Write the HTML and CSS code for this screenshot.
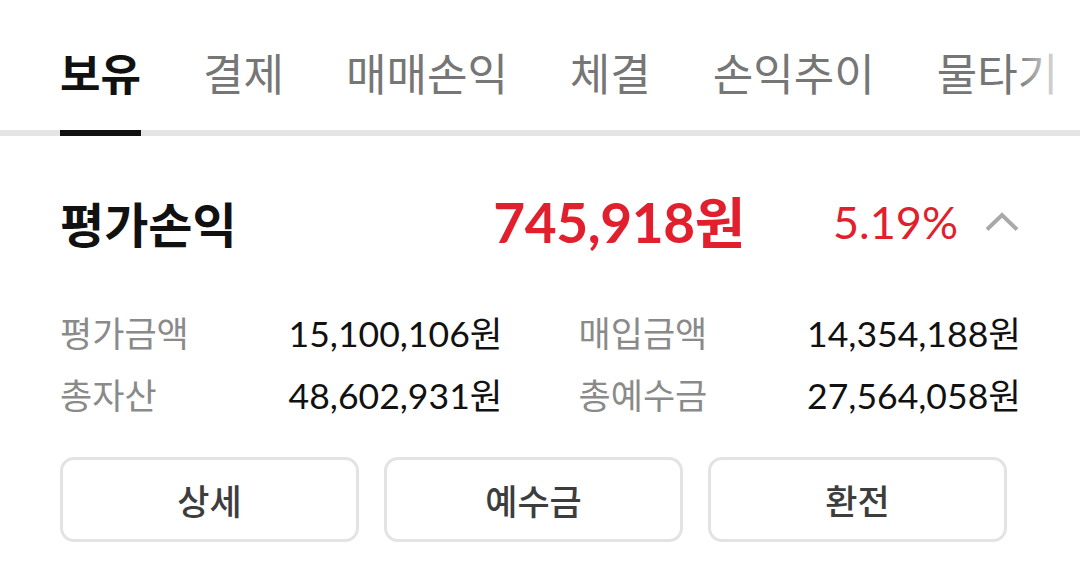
FILE: index.html
```html
<!DOCTYPE html>
<html lang="ko">
<head>
<meta charset="utf-8">
<title>보유</title>
<link rel="stylesheet" href="styles.css">
</head>
<body>
<div class="tabbar">
  <nav class="tabs">
    <span class="tab active">보유</span>
    <span class="tab">결제</span>
    <span class="tab">매매손익</span>
    <span class="tab">체결</span>
    <span class="tab">손익추이</span>
    <span class="tab">물타기</span>
  </nav>
  <div class="fade"></div>
</div>

<section class="summary">
  <h2 class="title">평가손익</h2>
  <span class="profit">745,918원</span>
  <span class="rate">5.19%</span>
  <svg class="chev" width="34" height="20" viewBox="0 0 34 20"><polyline points="2,17.5 17,3 32,17.5" fill="none" stroke="#a9a9a9" stroke-width="4"/></svg>
</section>

<section class="details">
  <div class="item"><span class="label">평가금액</span><span class="value">15,100,106원</span></div>
  <div class="item"><span class="label">매입금액</span><span class="value">14,354,188원</span></div>
  <div class="item"><span class="label">총자산</span><span class="value">48,602,931원</span></div>
  <div class="item"><span class="label">총예수금</span><span class="value">27,564,058원</span></div>
</section>

<div class="actions">
  <button class="btn">상세</button>
  <button class="btn">예수금</button>
  <button class="btn">환전</button>
</div>
</body>
</html>
```

FILE: styles.css
```css
* { box-sizing: border-box; }
html, body { margin: 0; padding: 0; background: #fff; }
body {
  width: 1080px;
  height: 586px;
  overflow: hidden;
  font-family: "Noto Sans CJK KR", "Noto Sans", sans-serif;
  color: #111;
}

.tabbar {
  position: relative;
}
.tabs {
  display: flex;
  gap: 62px;
  padding: 0 0 0 60px;
  white-space: nowrap;
  overflow: hidden;
  box-shadow: inset 0 -6px 0 #e4e4e6;
}
.tab {
  flex: none;
  font-size: 44px;
  line-height: 44px;
  padding: 50px 0 36px;
  border-bottom: 6px solid transparent;
  color: #767676;
}
.tab.active {
  color: #111;
  font-weight: 700;
  border-bottom-color: #111;
}
.fade {
  position: absolute;
  top: 0;
  right: 0;
  width: 64px;
  height: 128px;
  background: linear-gradient(to right, rgba(255,255,255,0), #fff 85%);
}

.summary {
  display: flex;
  align-items: center;
  height: 50px;
  margin-top: 61px;
  padding: 0 61px 0 60px;
}
.title {
  flex: 1;
  margin: 0;
  font-size: 48px;
  font-weight: 700;
  line-height: 50px;
  color: #111;
}
.profit {
  font-family: Lato, "Noto Sans CJK KR", sans-serif;
  font-weight: 700;
  font-size: 55px;
  letter-spacing: -0.4px;
  line-height: 50px;
  color: #e11f2d;
}
.rate {
  margin-left: 88px;
  font-family: Lato, "Noto Sans CJK KR", sans-serif;
  font-size: 45px;
  line-height: 50px;
  color: #e11f2d;
}
.chev {
  margin-left: 27px;
  display: block;
}

.details {
  display: grid;
  grid-template-columns: 1fr 1fr;
  column-gap: 76px;
  row-gap: 18px;
  margin-top: 62px;
  padding: 0 59px 0 60px;
}
.item {
  display: flex;
  justify-content: space-between;
  align-items: center;
  height: 44px;
}
.label {
  font-size: 35px;
  color: #8a8a8a;
}
.value {
  font-family: Lato, "Noto Sans CJK KR", sans-serif;
  font-size: 35.6px;
  color: #111;
}

.actions {
  display: grid;
  grid-template-columns: repeat(3, 299px);
  gap: 25px;
  margin-top: 42px;
  padding-left: 60px;
}
.btn {
  height: 85px;
  border: 3px solid #e3e3e5;
  border-radius: 14px;
  background: #fff;
  font-family: "Noto Sans CJK KR", sans-serif;
  font-size: 35px;
  font-weight: 500;
  color: #3d3d3d;
  padding: 0;
}
```
